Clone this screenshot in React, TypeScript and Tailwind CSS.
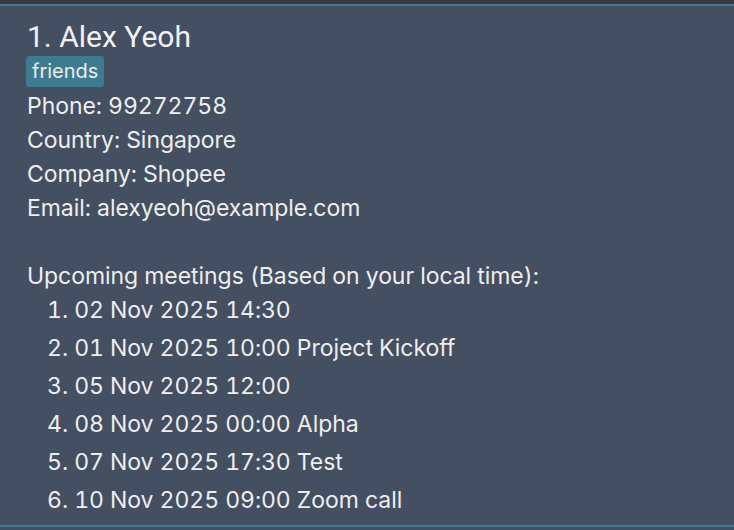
export default function App() {
  const meetings = [
    "02 Nov 2025 14:30",
    "01 Nov 2025 10:00 Project Kickoff",
    "05 Nov 2025 12:00",
    "08 Nov 2025 00:00 Alpha",
    "07 Nov 2025 17:30 Test",
    "10 Nov 2025 09:00 Zoom call",
  ];
  return (
    <div className="w-[734px] h-[530px] bg-[#444f61] flex flex-col overflow-hidden" style={{ fontFamily: "Inter, 'Noto Sans', sans-serif" }}>
      <div className="h-[4px] bg-[#3b3b3b]" />
      <div className="h-[2px] bg-[#3e7b91]" />
      <div className="flex-1 pl-[27px] pt-[13px] text-[#eeeeee]">
        <div className="h-[36px] leading-[36px] text-[30px] text-[#f2f2f2]" style={{ fontFamily: "Roboto, sans-serif" }}>
          1. Alex Yeoh
        </div>
        <div className="mt-[1px] flex">
          <span className="h-[31px] leading-[31px] px-[6px] rounded-[3px] bg-[#3e7b91] text-[20px] text-[#eeeeee] -ml-[1px]">friends</span>
        </div>
        <div className="mt-[2px] text-[23px] leading-[34px] tabular-nums tracking-[-0.05px]">
          <div>Phone: 99272758</div>
          <div>Country: Singapore</div>
          <div>Company: Shopee</div>
          <div>Email: alexyeoh@example.com</div>
          <div className="h-[34px]" />
          <div className="h-[32px] leading-[34px]">Upcoming meetings (Based on your local time):</div>
          <div className="pl-[20px]">
            {meetings.map((m, i) => (
              <div key={i} className="h-[38px] leading-[38px]">
                {i + 1}. {m}
              </div>
            ))}
          </div>
        </div>
      </div>
      <div className="h-[2px] bg-[#3e7b91]" />
      <div className="h-[3px]" />
    </div>
  );
}
